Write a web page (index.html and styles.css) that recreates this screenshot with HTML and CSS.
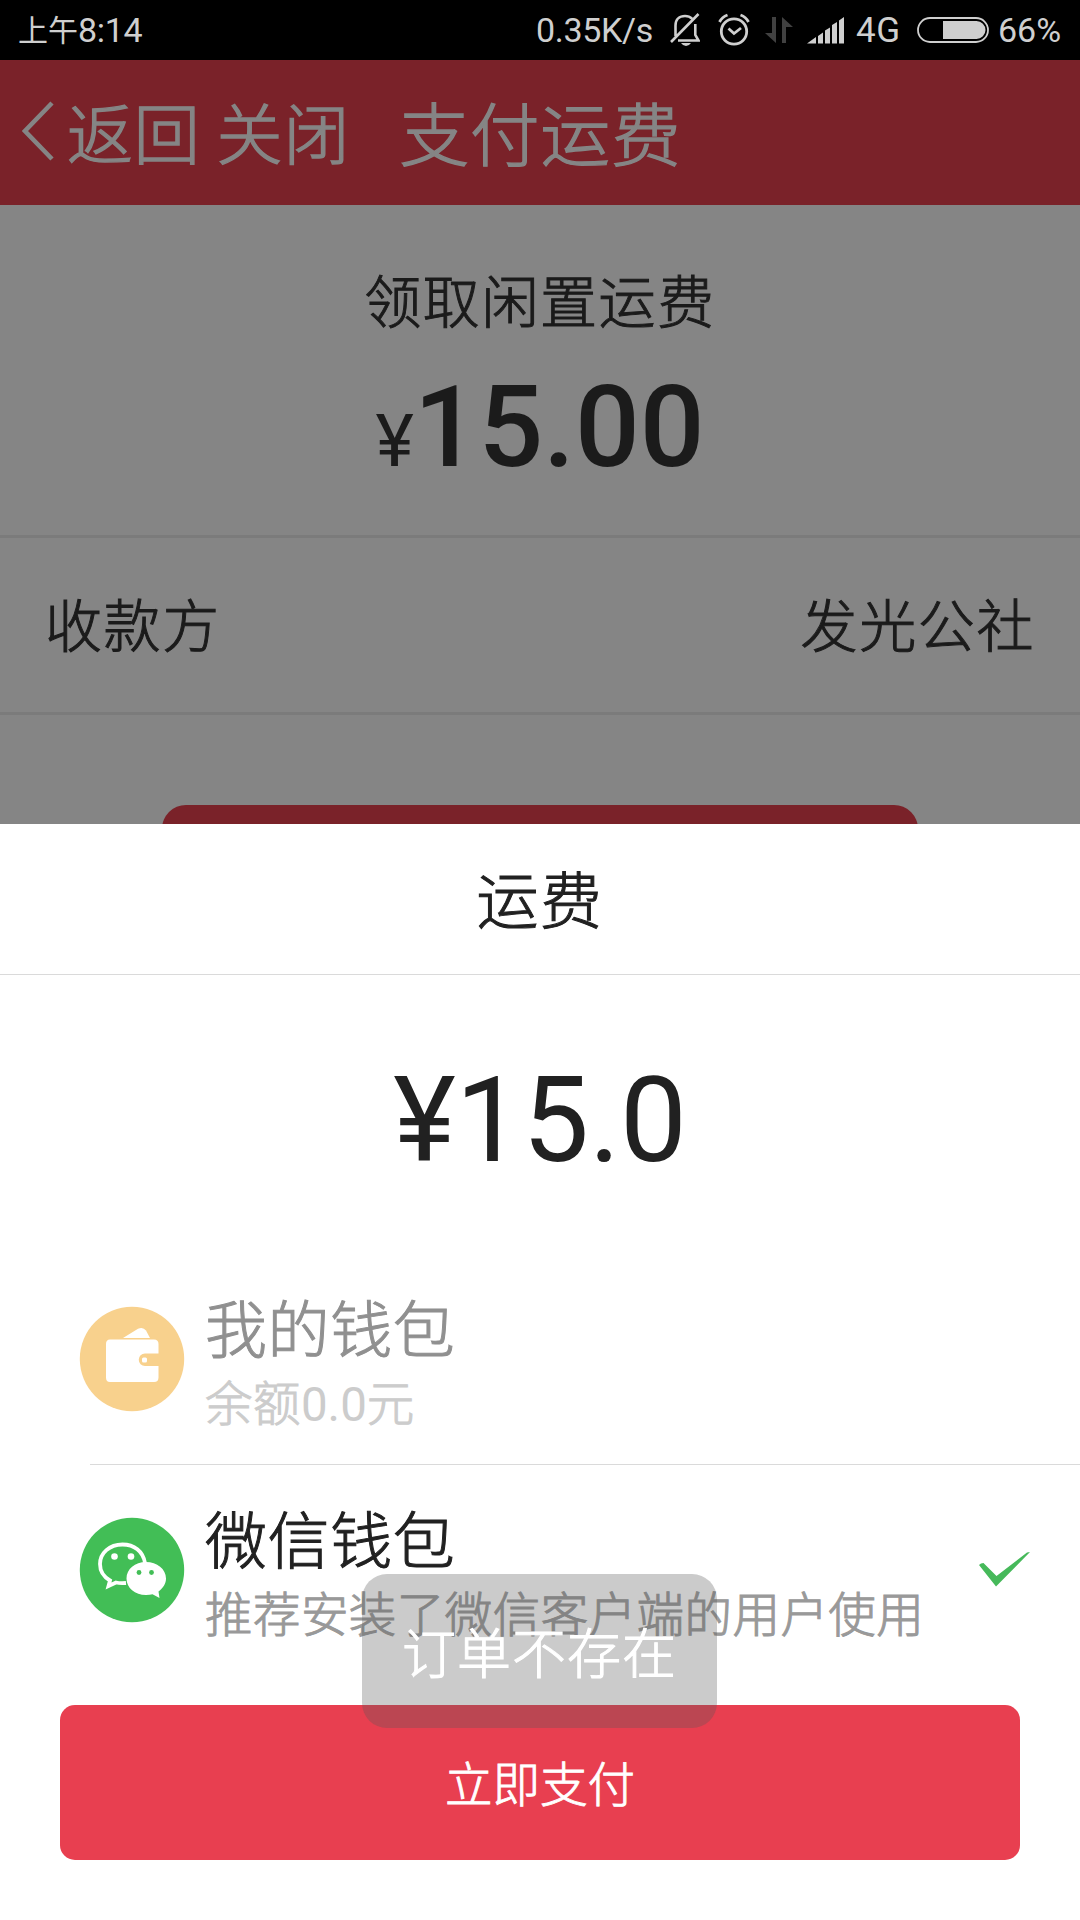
FILE: index.html
```html
<!DOCTYPE html>
<html lang="zh-CN">
<head>
<meta charset="utf-8">
<title>支付运费</title>
<link rel="stylesheet" href="styles.css">
</head>
<body>
<div class="screen">
  <header class="status">
    <div class="clock"><span class="clock-cn">上午</span><span class="clock-time">8:14</span></div>
    <div class="status-right">
      <span class="speed">0.35K/s</span>
      <svg class="bell" width="30" height="34" viewBox="0 0 30 34" fill="none" stroke="#cfcfcf" stroke-width="2.6">
        <path d="M5.500 22V12.500C5.500 6.500 9.500 3 15 3C18 3 20.300 4 22 5.700M25.300 11V22L28.500 27.500H8M1 29L28.500 1M5.500 19V23"/>
        <path d="M11 30H21Q19 33 16 33T11 30Z" fill="#cfcfcf" stroke="none"/>
      </svg>
      <svg class="alarm" width="32" height="34" viewBox="0 0 32 34" fill="none" stroke="#cfcfcf" stroke-width="2.8">
        <circle cx="16" cy="18.500" r="12.700"/>
        <path d="M10.500 15.500L16 20.500L23 15"/>
        <path d="M1.500 9Q4 4 9.500 2M22.500 2Q28 4 30.500 9"/>
      </svg>
      <svg class="arrows" width="28" height="28" viewBox="0 0 28 28" fill="#414141">
        <path d="M7 1H11V27L0 17H7ZM17 27V1L28 11H21V27Z"/>
      </svg>
      <svg class="signal" width="37" height="27" viewBox="0 0 37 27" fill="#cfcfcf">
        <path d="M0 26.500L9 20V26.500ZM11 19L16 15.500V26.500H11ZM18 13.500L23 10.500V26.500H18ZM25 8L30 5V26.500H25ZM32 3.500L37 0V26.500H32Z"/>
      </svg>
      <span class="net">4G</span>
      <svg class="battery" width="72" height="26" viewBox="0 0 72 26">
        <rect x="1" y="1" width="70" height="24" rx="12" fill="none" stroke="#cfcfcf" stroke-width="1.800"/>
        <path d="M26 4H59.500A9 9 0 0 1 59.500 22H26Z" fill="#cfcfcf"/>
      </svg>
      <span class="percent">66%</span>
    </div>
  </header>

  <nav class="navbar">
    <svg class="back-icon" width="32" height="60" viewBox="0 0 32 60" fill="none" stroke="#858585" stroke-width="4.500">
      <path d="M30 2L3 30L30 58"/>
    </svg>
    <span class="back">返回</span>
    <span class="close">关闭</span>
    <h1 class="nav-title">支付运费</h1>
  </nav>

  <main class="page">
    <section class="summary">
      <div class="summary-name">领取闲置运费</div>
      <div class="summary-price"><span class="yen">¥</span>15.00</div>
    </section>
    <section class="payee">
      <span>收款方</span>
      <span>发光公社</span>
    </section>
    <div class="page-button"></div>
  </main>

  <section class="sheet">
    <h2 class="sheet-title">运费</h2>
    <div class="amount">¥15.0</div>
    <div class="methods">
      <div class="method">
        <svg class="method-icon" width="106" height="106" viewBox="0 0 106 106">
          <circle cx="53" cy="53" r="52.200" fill="#f8d18d"/>
          <path d="M44 32L59 22.800Q64 20.500 67 24.500L71 32Z" fill="#fff"/>
          <path d="M31 33.500H75Q79.500 33.500 79.500 38V47.500H66A6.200 6.200 0 0 0 66 60H79.500V71.500Q79.500 76 75 76H31Q27 76 27 71.500V38Q27 33.500 31 33.500Z" fill="#fff"/>
          <rect x="63" y="51.500" width="5" height="5" rx="1.500" fill="#fff"/>
        </svg>
        <div class="method-text">
          <div class="method-name muted">我的钱包</div>
          <div class="method-note faint">余额<span class="num">0.0</span>元</div>
        </div>
      </div>
      <div class="divider"></div>
      <div class="method method-selected">
        <svg class="method-icon" width="106" height="106" viewBox="0 0 106 106">
          <circle cx="53" cy="53" r="52.200" fill="#42be56"/>
          <path d="M66 46C64 34 55 27.500 43.500 27.500C30.500 27.500 21 36 21 47C21 54 25 60 31 63.500L29.500 69L37 65.500Q41 66.500 47 66" fill="none" stroke="#fff" stroke-width="3.800"/>
          <circle cx="35.500" cy="39.500" r="3.300" fill="#fff"/><circle cx="52" cy="39.500" r="3.300" fill="#fff"/>
          <path d="M67 45C78 45 87 52 87 61.500C87 67 84 71 79.500 74.500L80.500 81L73.500 77.300Q71 78 67 78C56 78 47.500 71 47.500 61.500C47.500 52 56 45 67 45Z" fill="#fff"/>
          <circle cx="60" cy="55.500" r="2.400" fill="#42be56"/><circle cx="72.500" cy="55.500" r="2.400" fill="#42be56"/>
        </svg>
        <div class="method-text">
          <div class="method-name">微信钱包</div>
          <div class="method-note">推荐安装了微信客户端的用户使用</div>
        </div>
        <svg class="check" width="51" height="35" viewBox="0 0 51 35">
          <path d="M0 13L2 11.500L4.500 11L17.500 24L48 0.500L51 0L17 34.500Z" fill="#46b95a"/>
        </svg>
      </div>
    </div>
    <button class="pay">立即支付</button>
  </section>

  <div class="toast">订单不存在</div>
</div>
</body>
</html>
```
FILE: styles.css
```css
* { box-sizing: border-box; }

body {
  margin: 0;
  font-family: "Noto Sans CJK SC", sans-serif;
  font-weight: 300;
  color: #212121;
  -webkit-text-stroke: 1px currentColor;
}

.screen {
  position: relative;
  width: 1080px;
  height: 1920px;
  overflow: hidden;
  background: #fff;
}

.status {
  display: flex;
  justify-content: space-between;
  height: 60px;
  padding: 0 18px;
  background: #000;
  color: #cfcfcf;
  font: 400 34px/60px Roboto, sans-serif;
  -webkit-text-stroke: 0;
}

.clock { display: flex; }
.clock-cn { font: 400 30px/57px "Noto Sans CJK SC", sans-serif; }
.clock-time { letter-spacing: -0.3px; }

.status-right {
  display: flex;
  align-items: center;
  white-space: nowrap;
}
.speed { width: 134px; letter-spacing: -0.3px; }
.bell { margin-right: 18px; }
.alarm { margin-right: 15px; }
.arrows { margin-right: 14px; }
.signal { margin-right: 12px; }
.net { width: 61px; padding-top: 2px; font-size: 35px; letter-spacing: 0.5px; }
.battery { margin-right: 9px; }
.percent { width: 64px; letter-spacing: 0; }

.navbar {
  display: flex;
  align-items: center;
  height: 145px;
  padding: 0 0 4px 22px;
  background: #7a2229;
  color: #858585;
  line-height: 141px;
  white-space: nowrap;
  -webkit-text-stroke-width: 1.4px;
}
.back-icon { margin-right: 13px; }
.back, .close { font-size: 66px; letter-spacing: 0.8px; }
.back { margin-right: 16px; }
.close { margin-right: 49px; }
.nav-title {
  margin: 0;
  font-size: 69.5px;
  font-weight: 300;
  letter-spacing: 1.2px;
}

.page {
  height: 619px;
  overflow: hidden;
  background: #858585;
  color: #1b1b1b;
}
.summary {
  height: 333px;
  padding-top: 53px;
  border-bottom: 3px solid #7b7b7b;
  text-align: center;
}
.summary-name {
  font-size: 57px;
  line-height: 80px;
  letter-spacing: 1.6px;
}
.summary-price {
  margin-top: 22px;
  font: 500 114px/134px Roboto, sans-serif;
  -webkit-text-stroke: 0;
}
.yen { font-size: 73px; font-weight: 400; }

.payee {
  display: flex;
  justify-content: space-between;
  height: 177px;
  padding: 0 45px;
  border-bottom: 3px solid #7b7b7b;
  font-size: 57px;
  line-height: 168px;
  letter-spacing: 1.6px;
}
.page-button {
  height: 120px;
  margin: 90px 162px 0;
  border-radius: 24px;
  background: #7a2229;
}

.sheet {
  display: flex;
  flex-direction: column;
  height: 1096px;
  padding-bottom: 60px;
  background: #fff;
}
.sheet-title {
  height: 151px;
  margin: 0;
  border-bottom: 1px solid #dadada;
  font-size: 62px;
  font-weight: 300;
  line-height: 147px;
  letter-spacing: 1.6px;
  text-align: center;
}
.amount {
  margin-top: 76px;
  font: 400 119px/140px Roboto, sans-serif;
  letter-spacing: -0.2px;
  text-align: center;
  -webkit-text-stroke: 0;
}

.methods { padding: 91px 0 0; }
.method {
  display: flex;
  height: 211px;
  padding: 0 50px 0 79px;
}
.method-icon { flex: none; margin: 24px 20px 0 0; }
.method-text { flex: 1; padding-top: 2px; white-space: nowrap; }
.method-name {
  height: 84px;
  font-size: 62px;
  line-height: 84px;
  letter-spacing: 0.6px;
}
.method-note {
  font-size: 47.5px;
  line-height: 66px;
  letter-spacing: 0.45px;
  color: #999;
}
.method-name.muted { color: #909090; }
.method-note.faint { color: #ccc; }
.num {
  font-family: Roboto, sans-serif;
  font-weight: 400;
  letter-spacing: 0;
  -webkit-text-stroke: 0;
}
.divider {
  height: 1px;
  margin: -29px 0 28px 90px;
  background: #dadada;
}
.method-selected { height: 199px; }
.check { flex: none; margin-top: 59px; }

.pay {
  height: 155px;
  margin: auto 60px 0;
  padding: 0 0 2px;
  border: 0;
  border-radius: 15px;
  background: #e83f50;
  color: #fff;
  font: 300 47.5px/153px "Noto Sans CJK SC", sans-serif;
  -webkit-text-stroke: 0.9px #fff;
}

.toast {
  position: absolute;
  left: 362px;
  top: 1574px;
  width: 355px;
  height: 154px;
  border-radius: 25px;
  background: rgba(87, 87, 87, 0.31);
  color: #fff;
  font-size: 54px;
  line-height: 154px;
  letter-spacing: 1px;
  text-align: center;
  -webkit-text-stroke: 1px #fff;
}
```
